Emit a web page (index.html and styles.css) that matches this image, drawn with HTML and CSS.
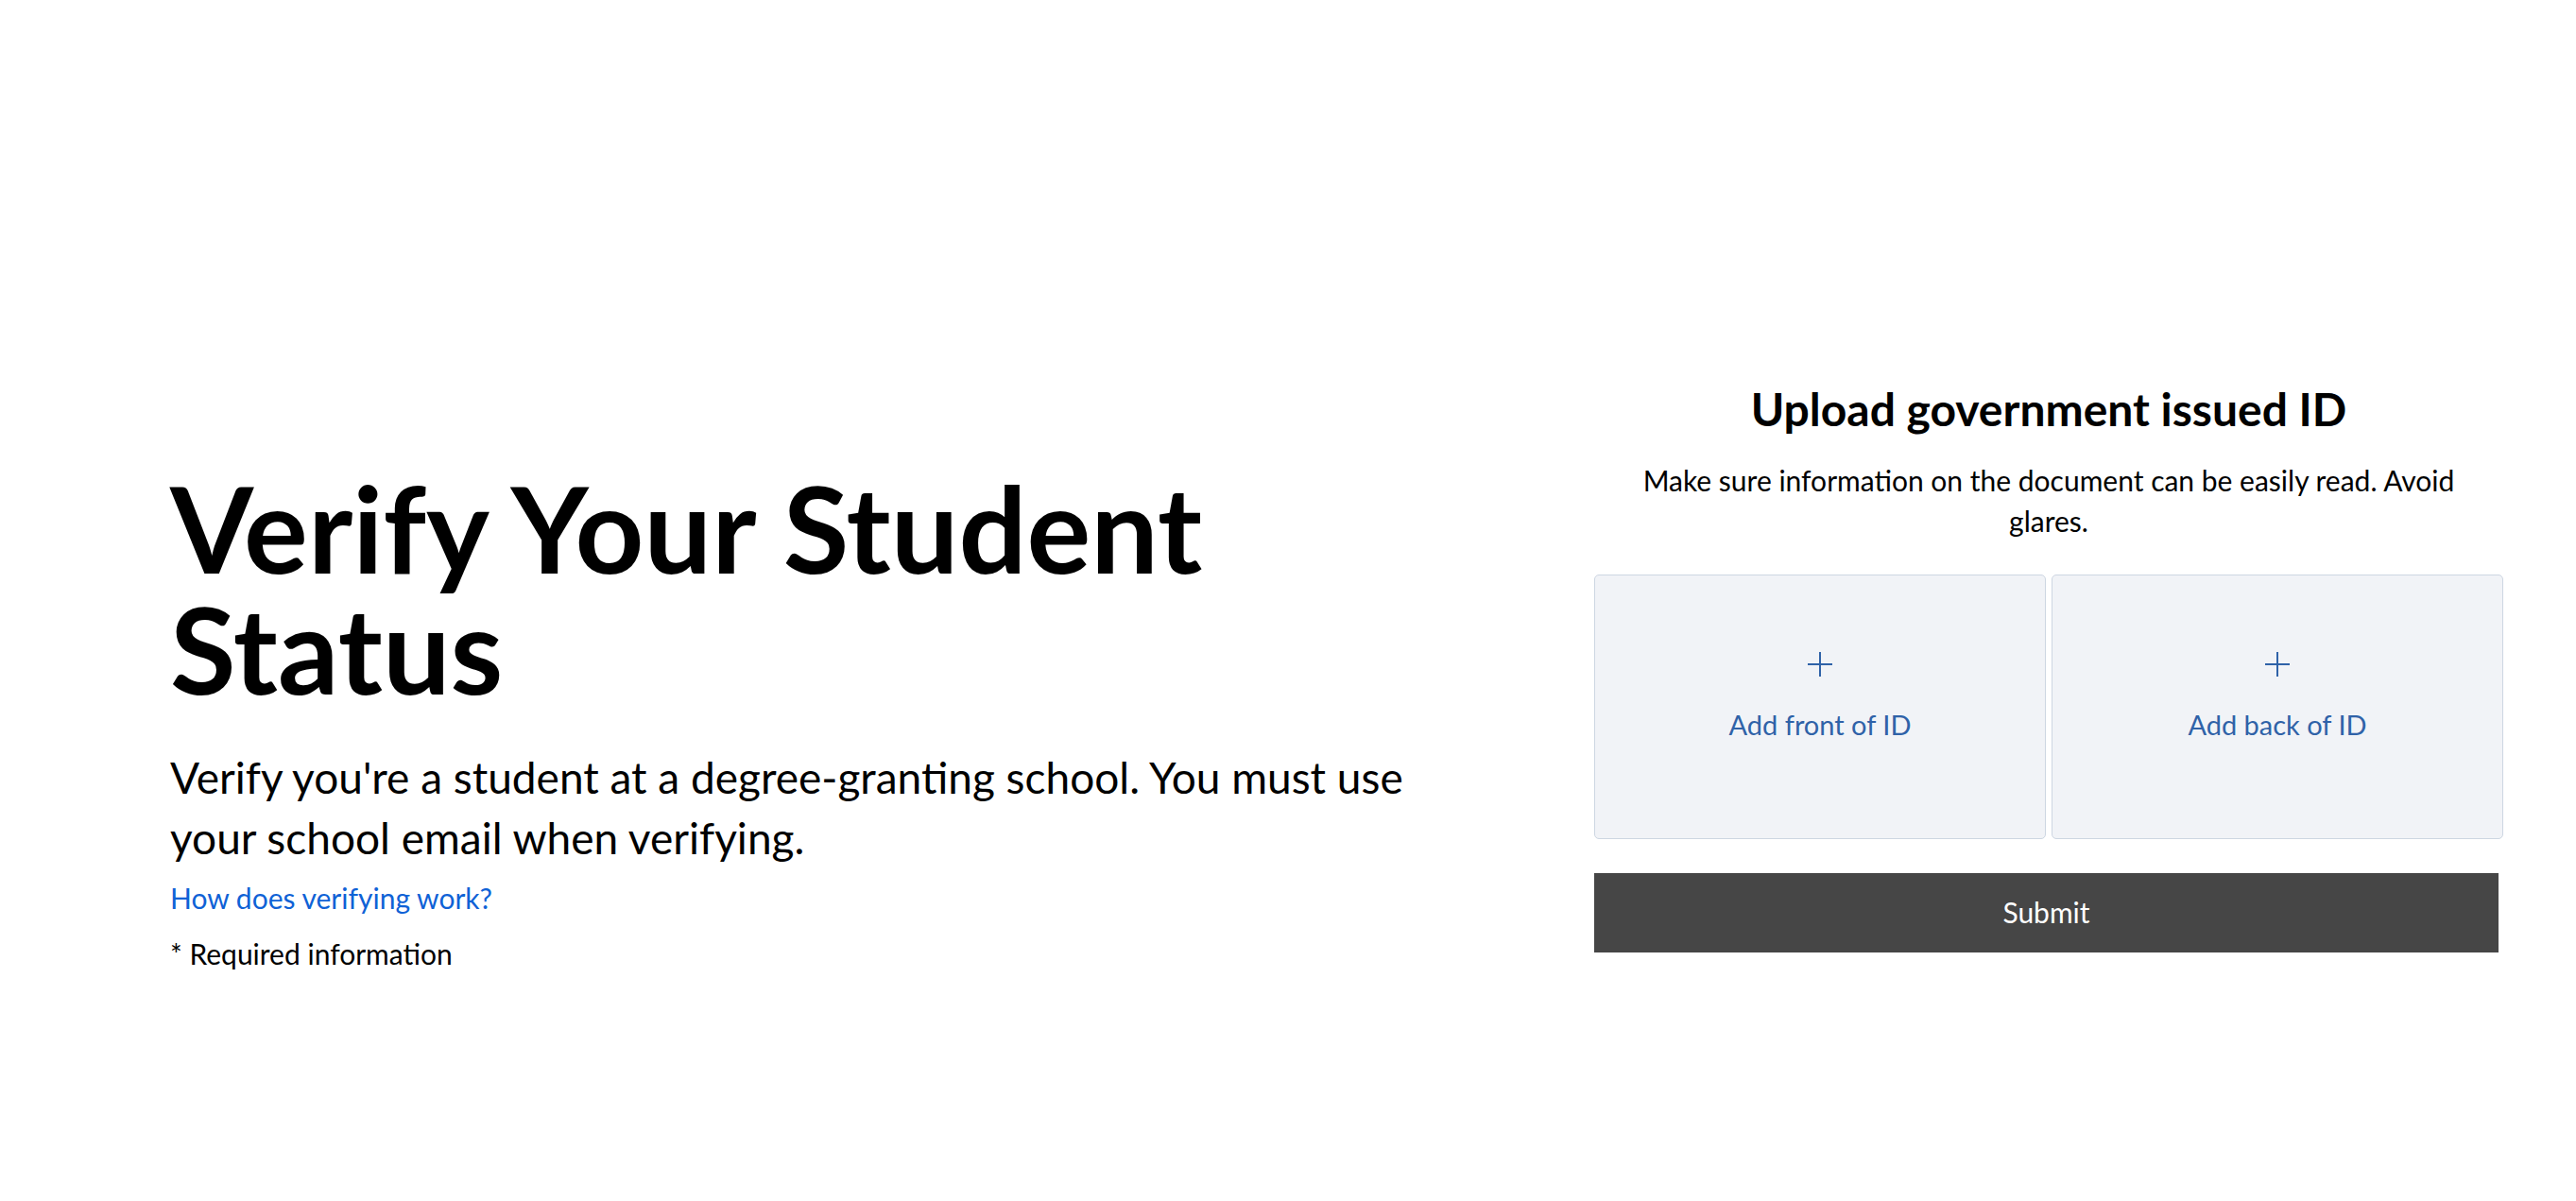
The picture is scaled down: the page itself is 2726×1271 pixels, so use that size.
FILE: index.html
```html
<!DOCTYPE html>
<html lang="en">
<head>
  <meta charset="UTF-8" />
  <meta name="viewport" content="width=device-width, initial-scale=1.0"/>
  <title>Verify Your Student Status</title>
  <link rel="stylesheet" href="styles.css">
</head>
<body>

  <main class="page">

    <!-- Texto de introducción -->
    <section class="intro">
      <h1>Verify Your Student Status</h1>
      <p class="lead">Verify you're a student at a degree-granting school. You must use your school email when verifying.</p>
      <a href="#" class="help-link">How does verifying work?</a>
      <p class="required">* Required information</p>
    </section>

    <!-- Subida de documento -->
    <section class="upload">
      <h2>Upload government issued ID</h2>
      <p class="hint">Make sure information on the document can be easily read. Avoid glares.</p>

      <div class="id-slots">
        <button class="id-slot" type="button">
          <svg class="plus" viewBox="0 0 28 28" width="28" height="28"><path d="M14 1v26M1 14h26" /></svg>
          <span>Add front of ID</span>
        </button>
        <button class="id-slot" type="button">
          <svg class="plus" viewBox="0 0 28 28" width="28" height="28"><path d="M14 1v26M1 14h26" /></svg>
          <span>Add back of ID</span>
        </button>
      </div>

      <button class="submit" type="button">Submit</button>
    </section>

  </main>

</body>
</html>
```

FILE: styles.css
```css
body {
  font-family: "Segoe UI", Lato, sans-serif;
  background: #ffffff;
  color: #000000;
  margin: 0;
  padding: 0;
}

.page {
  display: flex;
  align-items: flex-start;
  padding: 406px 77px 0 180px;
}

.intro {
  width: 1340px;
  margin-top: 88px;
}

h1 {
  font-size: 127px;
  line-height: 128px;
  font-weight: 700;
  margin: 0 0 41px;
}

.lead {
  font-size: 46px;
  line-height: 64px;
  margin: 0 0 11px;
}

.help-link {
  display: block;
  font-size: 30px;
  line-height: 40px;
  color: #0f62d6;
  text-decoration: none;
}

.required {
  font-size: 30px;
  line-height: 40px;
  margin: 19px 0 0;
}

.upload {
  width: 962px;
  margin-left: auto;
  text-align: center;
}

h2 {
  font-size: 48px;
  line-height: 54px;
  font-weight: 700;
  margin: 0 0 27px;
}

.hint {
  font-size: 30px;
  line-height: 43px;
  margin: 0 0 35px;
  padding: 0 20px;
}

.id-slots {
  display: grid;
  grid-template-columns: 1fr 1fr;
  gap: 6px;
}

.id-slot {
  height: 280px;
  padding: 0 0 24px;
  background: #f1f3f7;
  border: 1px solid #cdd6e2;
  border-radius: 5px;
  display: flex;
  flex-direction: column;
  align-items: center;
  justify-content: center;
  gap: 32px;
  font-family: inherit;
  font-size: 29px;
  color: #2f62a8;
  cursor: pointer;
}

.plus {
  stroke: #2f62a8;
  stroke-width: 2;
  fill: none;
}

.submit {
  display: block;
  width: 957px;
  height: 84px;
  margin-top: 36px;
  padding-bottom: 4px;
  background: #464646;
  color: #ffffff;
  border: none;
  font-family: inherit;
  font-size: 30px;
  cursor: pointer;
}
```
